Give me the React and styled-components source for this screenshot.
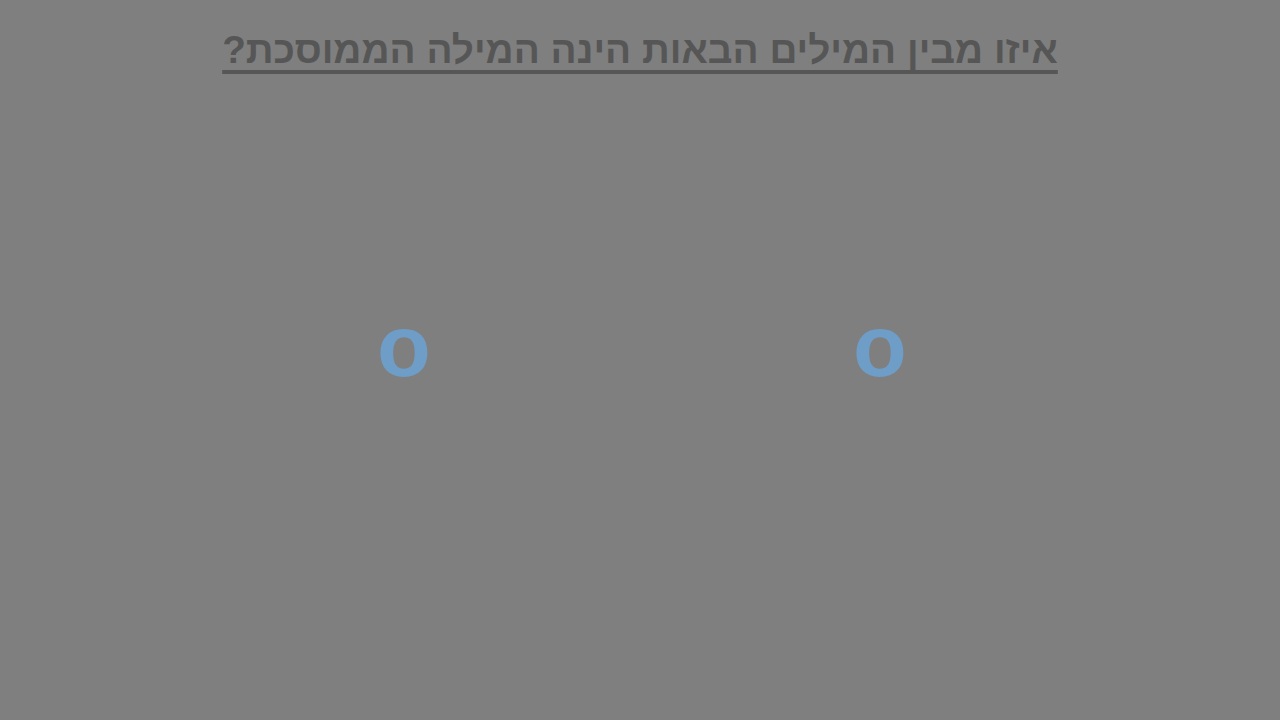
import React from "react";
import styled, { createGlobalStyle } from "styled-components";

const GlobalStyle = createGlobalStyle`
  html, body {
    margin: 0;
    padding: 0;
    background: #7f7f7f;
  }
  body {
    font-family: "Liberation Sans", Arial, sans-serif;
  }
`;

const Page = styled.div`
  width: 1280px;
  height: 720px;
  background: #7f7f7f;
  display: flex;
  flex-direction: column;
  align-items: center;
  direction: rtl;
`;

const Question = styled.h1`
  margin: 28px 0 0 0;
  font-size: 38.7px;
  font-weight: bold;
  color: #565656;
  text-decoration: underline;
  text-decoration-thickness: 4px;
  text-underline-offset: 7px;
  text-decoration-skip-ink: none;
`;

const Options = styled.div`
  margin-top: 230px;
  margin-left: 4px;
  width: 952px;
  display: grid;
  grid-template-columns: 1fr 1fr;
  direction: ltr;
`;

const Option = styled.div`
  text-align: center;
  font-size: 88px;
  font-weight: bold;
  line-height: 1;
  color: #6e9dc7;
`;

export default function App() {
  return (
    <>
      <GlobalStyle />
      <Page>
        <Question>איזו מבין המילים הבאות הינה המילה הממוסכת?</Question>
        <Options>
          <Option>o</Option>
          <Option>o</Option>
        </Options>
      </Page>
    </>
  );
}
